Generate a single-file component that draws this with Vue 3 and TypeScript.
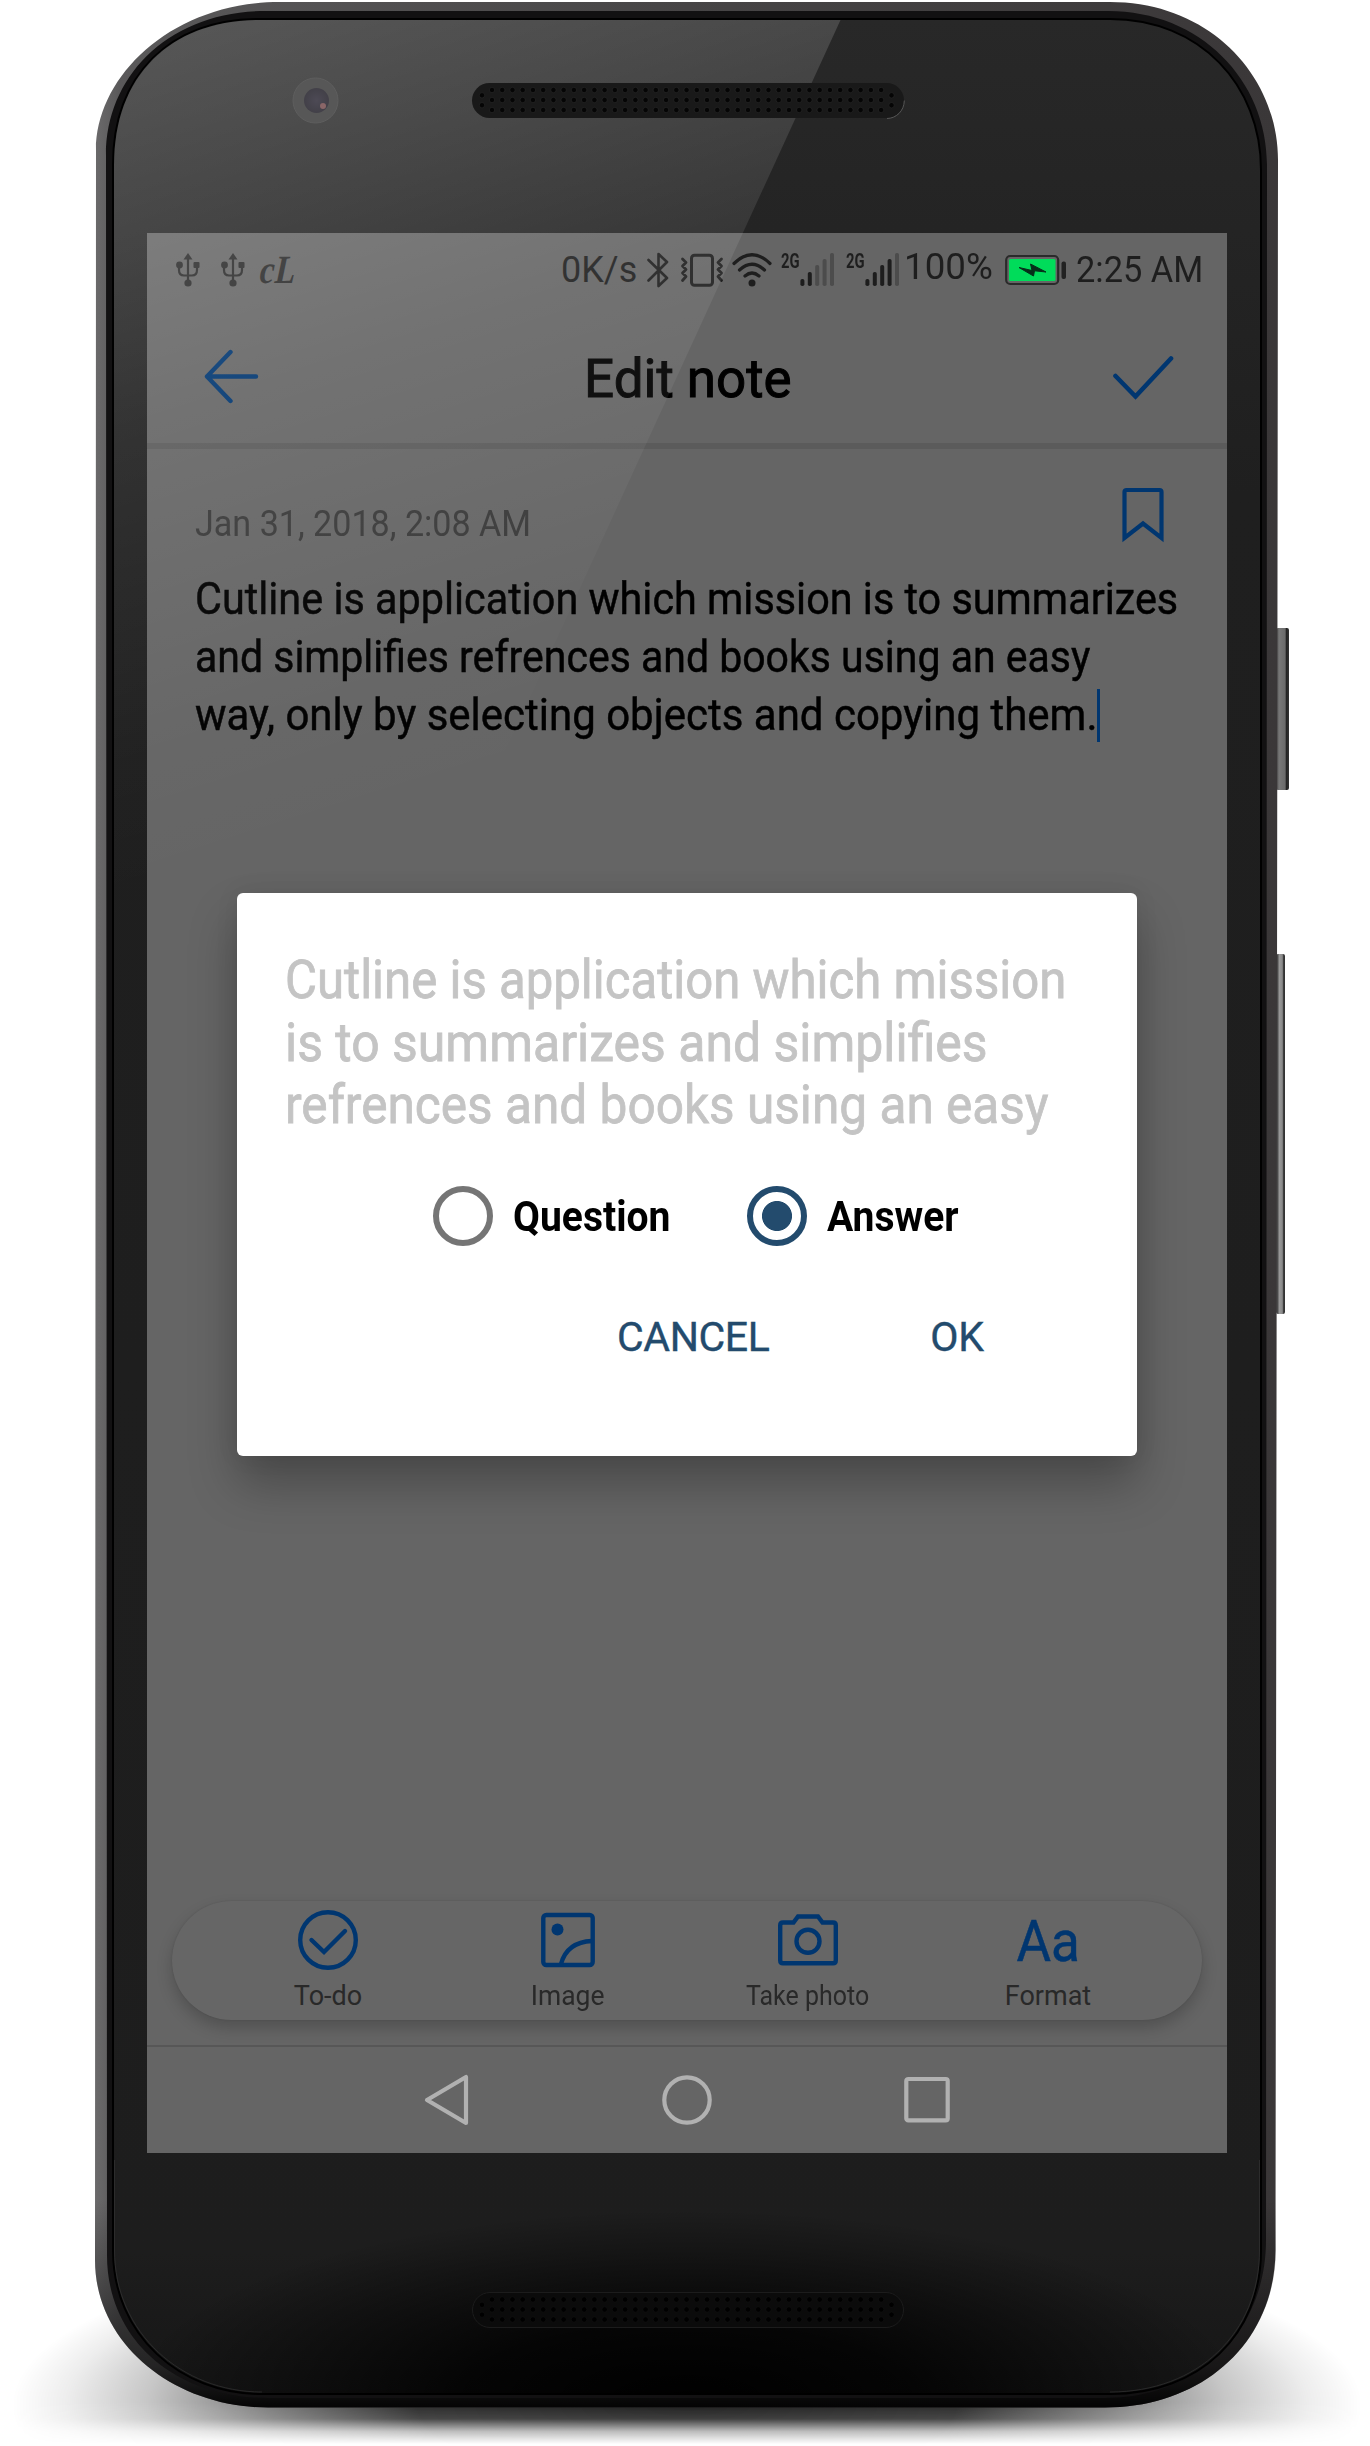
<script setup lang="ts">
interface Dot { x: number; y: number }
interface Bar { x: number; h: number; on: boolean }

// speaker perforation: three full rows plus two holes at each rounded end
const dots: Dot[] = []
for (let c = 0; c < 39; c++) {
  for (let r = 0; r < 3; r++) dots.push({ x: 492 + c * 10.24, y: 90 + r * 10 })
}
for (const x of [482, 891.5]) dots.push({ x, y: 95.3 }, { x, y: 105.2 })

const bars = (active: number): Bar[] =>
  [7, 14, 21, 27, 33].map((h, i) => ({ x: 0.4 + i * 7.4, h, on: i < active }))
const signals = [bars(2), bars(4)]

const noteLines = [
  'Cutline is application which mission is to summarizes',
  'and simplifies refrences and books using an easy',
  'way, only by selecting objects and copying them.',
]
const quoteLines = [
  'Cutline is application which mission',
  'is to summarizes and simplifies',
  'refrences and books using an easy',
]
</script>

<template>
  <main class="stage">
    <svg class="device" width="1370" height="2446" viewBox="0 0 1370 2446">
      <defs>
        <radialGradient id="floor" cx="0.5" cy="0.5" r="0.5">
          <stop offset="0" stop-color="#000" stop-opacity="0.9" />
          <stop offset="0.4" stop-color="#000" stop-opacity="0.85" />
          <stop offset="0.62" stop-color="#000" stop-opacity="0.52" />
          <stop offset="0.8" stop-color="#000" stop-opacity="0.22" />
          <stop offset="0.92" stop-color="#000" stop-opacity="0.07" />
          <stop offset="1" stop-color="#000" stop-opacity="0" />
        </radialGradient>
        <linearGradient id="floorFade" gradientUnits="userSpaceOnUse" x1="0" y1="2402" x2="0" y2="2444">
          <stop offset="0" stop-color="#fff" />
          <stop offset="0.4" stop-color="#fff" stop-opacity="0.85" />
          <stop offset="0.7" stop-color="#fff" stop-opacity="0.3" />
          <stop offset="1" stop-color="#fff" stop-opacity="0" />
        </linearGradient>
        <mask id="floorMask" maskUnits="userSpaceOnUse" x="0" y="2150" width="1370" height="296">
          <rect y="2150" width="1370" height="296" fill="url(#floorFade)" />
        </mask>
        <linearGradient id="rim" gradientUnits="userSpaceOnUse" x1="96" y1="0" x2="1278" y2="0">
          <stop offset="0" stop-color="#6a696a" />
          <stop offset="0.02" stop-color="#5a595a" />
          <stop offset="0.5" stop-color="#474546" />
          <stop offset="1" stop-color="#3a3738" />
        </linearGradient>
        <linearGradient id="rimDark" gradientUnits="userSpaceOnUse" x1="0" y1="2200" x2="0" y2="2408">
          <stop offset="0" stop-color="#000" stop-opacity="0" />
          <stop offset="0.8" stop-color="#000" stop-opacity="0.6" />
          <stop offset="1" stop-color="#000" stop-opacity="0.95" />
        </linearGradient>
        <linearGradient id="glass" gradientUnits="userSpaceOnUse" x1="0" y1="19" x2="0" y2="2395">
          <stop offset="0" stop-color="#282828" />
          <stop offset="0.2" stop-color="#1f1f1f" />
          <stop offset="0.94" stop-color="#1d1d1d" />
          <stop offset="1" stop-color="#161616" />
        </linearGradient>
        <radialGradient id="chin" gradientUnits="userSpaceOnUse" cx="0" cy="0" r="1" gradientTransform="translate(687 2400) scale(560 190)">
          <stop offset="0" stop-color="#000" />
          <stop offset="0.4" stop-color="#000" stop-opacity="0.8" />
          <stop offset="1" stop-color="#000" stop-opacity="0" />
        </radialGradient>
        <linearGradient id="key" x1="0" y1="0" x2="1" y2="0">
          <stop offset="0" stop-color="#4a4a4a" />
          <stop offset="0.25" stop-color="#777" />
          <stop offset="0.7" stop-color="#6a6a6a" />
          <stop offset="0.8" stop-color="#222" />
          <stop offset="1" stop-color="#333" />
        </linearGradient>
        <linearGradient id="rocker" x1="0" y1="0" x2="1" y2="0">
          <stop offset="0.2" stop-color="#4a4a4a" />
          <stop offset="0.35" stop-color="#999" />
          <stop offset="0.7" stop-color="#8a8a8a" />
          <stop offset="0.85" stop-color="#333" />
        </linearGradient>
      </defs>
      <ellipse cx="687" cy="2405" rx="675" ry="185" fill="url(#floor)" mask="url(#floorMask)" />
      <rect x="1276" y="628" width="13" height="162" rx="2" fill="url(#key)" />
      <rect x="1276" y="954" width="9" height="360" rx="2" fill="url(#rocker)" />
      <path fill="url(#rim)" d="M96 150C96 76 172 2 280 2H1110C1210 2 1278 76 1278 160L1275.500 2250C1275 2345 1200 2407.500 1105 2407.500H268C175 2407.500 95 2345 95 2260Z" />
      <path fill="url(#rimDark)" d="M95 2200H1276V2250C1275 2345 1200 2407.500 1105 2407.500H268C175 2407.500 95 2345 95 2260Z" />
      <path fill="#121112" d="M106 155C106 75 170 11 266 11H1108C1200 11 1267 80 1267 165L1266 2240C1266 2330 1200 2398 1105 2398H268C175 2398 107 2340 107 2255Z" />
      <path fill="url(#glass)" stroke="#000" stroke-width="2" d="M113 165C113 75 170 19 260 19H1110C1200 19 1261 85 1261 170V2250C1261 2335 1200 2394 1110 2394H262C180 2394 113 2335 113 2250Z" />
      <path fill="url(#chin)" d="M113 2165H1261V2250C1261 2335 1200 2394 1110 2394H262C180 2394 113 2335 113 2250Z" />
      <path fill="none" stroke="#333" stroke-width="1" d="M114.500 2160V2250C114.500 2333 182 2392 262 2392M1110 2392C1198 2392 1259.500 2333 1259.500 2250V2160" opacity=".7" />
    </svg>

    <section class="screen">
      <header class="status">
        <svg v-for="n in 2" :key="n" class="usb" width="24" height="36" viewBox="0 0 24 36">
          <path d="M12 5V30M3 13V18Q3 23.500 8 23.500H16Q21 23.500 21 18V13" fill="none" stroke="currentColor" stroke-width="2.200" />
          <path d="M12 1L16.500 7.500H7.500Z" fill="currentColor" />
          <circle cx="3.500" cy="13" r="3.400" fill="currentColor" />
          <rect x="17.500" y="10" width="6" height="6" rx="1" fill="currentColor" />
          <circle cx="12" cy="31" r="3.600" fill="currentColor" />
        </svg>
        <span class="logo">cL</span>
        <span class="t speed">0K/s</span>
        <svg class="bt" width="22" height="36" viewBox="0 0 22 36">
          <path d="M1.500 8L20 26L11.500 34V2L20 10L1.500 28.500" fill="none" stroke="currentColor" stroke-width="2.600" stroke-linejoin="round" stroke-linecap="round" />
        </svg>
        <svg class="vib" width="44" height="36" viewBox="0 0 44 36">
          <rect x="11.500" y="3.200" width="21" height="30" rx="3" fill="none" stroke="currentColor" stroke-width="3" />
          <path d="M2.500 7L6 10.500L2.500 14L6 17.500L2.500 21L6 24.500L2.500 28.500M41.500 7L38 10.500L41.500 14L38 17.500L41.500 21L38 24.500L41.500 28.500" fill="none" stroke="currentColor" stroke-width="2.800" stroke-linejoin="round" stroke-linecap="round" />
        </svg>
        <svg class="wifi" width="40" height="36" viewBox="0 0 40 36">
          <path d="M2 11.500Q20 -6 38 11.500M7.500 18Q20 6.500 32.500 18M13 24Q20 18 27 24" fill="none" stroke="currentColor" stroke-width="3.200" stroke-linecap="round" />
          <circle cx="20" cy="31" r="3.500" fill="currentColor" />
        </svg>
        <span v-for="(s, i) in signals" :key="i" class="signal">
          <b class="gen">2G</b>
          <svg width="34" height="36" viewBox="0 0 34 36">
            <rect v-for="b in s" :key="b.x" :x="b.x" :y="34 - b.h" width="4" :height="b.h" rx="1.800" :fill="b.on ? '#1d1d1d' : '#4c4c4c'" />
          </svg>
        </span>
        <span class="t percent">100%</span>
        <svg class="battery" width="62" height="32" viewBox="0 0 62 32">
          <rect x="1.200" y="2" width="52" height="28" rx="4" fill="none" stroke="#2a2a2a" stroke-width="2.200" />
          <rect x="4" y="5" width="46.500" height="22" rx="1.500" fill="#00dc5a" />
          <path d="M14 13.500L27 16.500L25.500 10L41 18L29.500 16.800L28.500 22Z" fill="#062f1a" stroke="#062f1a" />
          <rect x="56.500" y="7.500" width="4.500" height="17.500" rx="2" fill="#222" />
        </svg>
        <span class="t clock">2:25 AM</span>
      </header>

      <nav class="appbar">
        <svg width="56" height="58" viewBox="0 0 56 58">
          <path d="M52 28.500H3M26.500 4L3 28.500L26.500 53" fill="none" stroke="currentColor" stroke-width="4.400" stroke-linecap="round" stroke-linejoin="round" />
        </svg>
        <h1 class="t">Edit note</h1>
        <svg width="62" height="46" viewBox="0 0 62 46">
          <path d="M3.500 22L23.500 42.500L59 4.500" fill="none" stroke="currentColor" stroke-width="4.600" stroke-linecap="round" />
        </svg>
      </nav>

      <article class="note">
        <div class="meta">
          <time class="t">Jan 31, 2018, 2:08 AM</time>
          <svg width="44" height="58" viewBox="0 0 44 58">
            <path d="M3.500 52V6Q3.500 4 5.500 4H38.500Q40.500 4 40.500 6V52L22 37.500Z" fill="none" stroke="currentColor" stroke-width="4.200" />
          </svg>
        </div>
        <p class="body">
          <span v-for="(l, i) in noteLines" :key="l" class="row"><span class="t" :class="'n' + i">{{ l }}</span><i v-if="i === 2" class="caret"></i></span>
        </p>
      </article>

      <footer class="tools">
        <div class="tool">
          <svg width="60" height="60" viewBox="0 0 60 60">
            <circle cx="30" cy="30" r="27.800" /><path d="M13.500 30L26 42L47 21" stroke-linecap="round" />
          </svg>
          <span class="t">To-do</span>
        </div>
        <div class="tool">
          <svg width="60" height="60" viewBox="0 0 60 60">
            <rect x="5.300" y="5" width="49.400" height="50" rx="3" />
            <circle cx="19.500" cy="19.500" r="6" fill="currentColor" stroke="none" />
            <path d="M23 54Q29 32 54 31" />
          </svg>
          <span class="t image">Image</span>
        </div>
        <div class="tool">
          <svg width="60" height="60" viewBox="0 0 60 60">
            <path d="M5 12.500H15.500L20 6.500H40L44.500 12.500H55Q57.800 12.500 57.800 15.300V50.300Q57.800 53.300 55 53.300H5Q2.200 53.300 2.200 50.300V15.300Q2.200 12.500 5 12.500Z" />
            <circle cx="30" cy="31.300" r="11.500" />
          </svg>
          <span class="t photo">Take photo</span>
        </div>
        <div class="tool">
          <span class="t aa">Aa</span>
          <span class="t">Format</span>
        </div>
      </footer>

      <nav class="keys">
        <svg width="50" height="56" viewBox="0 0 50 56"><path d="M44 5V51L5 28Z" /></svg>
        <svg width="50" height="56" viewBox="0 0 50 56"><circle cx="25" cy="28" r="22.700" /></svg>
        <svg width="50" height="56" viewBox="0 0 50 56"><rect x="4.300" y="7" width="41.400" height="41.400" rx="2" /></svg>
      </nav>
    </section>

    <section class="dialog">
      <p class="quote">
        <span v-for="(l, i) in quoteLines" :key="l" class="row"><span class="t" :class="'q' + i">{{ l }}</span></span>
      </p>
      <div class="radios">
        <label class="radio"><i class="ring"></i><span class="t choice">Question</span></label>
        <label class="radio on"><i class="ring"></i><span class="t choice">Answer</span></label>
      </div>
      <div class="actions">
        <button type="button">CANCEL</button>
        <button type="button">OK</button>
      </div>
    </section>

    <svg class="gloss" width="1370" height="2446" viewBox="0 0 1370 2446">
      <defs>
        <linearGradient id="sheen" gradientUnits="userSpaceOnUse" x1="0" y1="0" x2="270" y2="855">
          <stop offset="0" stop-color="#fff" stop-opacity="0.240" />
          <stop offset="0.113" stop-color="#fff" stop-opacity="0.210" />
          <stop offset="0.3" stop-color="#fff" stop-opacity="0.152" />
          <stop offset="0.5" stop-color="#fff" stop-opacity="0.085" />
          <stop offset="0.85" stop-color="#fff" stop-opacity="0.015" />
          <stop offset="1" stop-color="#fff" stop-opacity="0" />
        </linearGradient>
        <radialGradient id="lens"><stop offset="0" stop-color="#4d4a55" /><stop offset="1" stop-color="#424048" /></radialGradient>
      </defs>
      <path fill="url(#sheen)" d="M114 165C114 75 170 20 260 20H840.500L437 900H114Z" />
      <circle cx="315.500" cy="100.500" r="22.500" fill="#575757" stroke="#5e5e5e" stroke-width="1" />
      <circle cx="316.500" cy="100.500" r="12.500" fill="url(#lens)" />
      <circle cx="323" cy="106" r="3" fill="#8a6668" />
      <rect x="472" y="83" width="432" height="35" rx="17.500" fill="#191919" />
      <path d="M887 118.500C896 118.500 904.300 111 904.300 100.500" fill="none" stroke="#555" />
      <circle v-for="(d, i) in dots" :key="'a' + i" :cx="d.x" :cy="d.y" r="2.700" fill="#050505" stroke="#303030" stroke-width=".5" />
      <g transform="translate(0 2209.500)">
        <rect x="472.500" y="83" width="431" height="35" rx="17.500" fill="#0b0b0b" stroke="#1c1c1c" />
        <circle v-for="(d, i) in dots" :key="'b' + i" :cx="d.x" :cy="d.y" r="2.700" fill="#000" stroke="#171717" stroke-width=".5" />
      </g>
    </svg>
  </main>
</template>

<style>
body { margin: 0; background: #fff; }
</style>

<style scoped>
.stage { position: relative; width: 1370px; height: 2446px; overflow: hidden; background: #fff; box-sizing: border-box; padding: 233px 0 0 147px; font-family: Roboto, "Liberation Sans", sans-serif; }
.device, .gloss { position: absolute; left: 0; top: 0; pointer-events: none; }
.t { white-space: nowrap; transform-origin: left center; }
.screen { position: relative; width: 1080px; height: 1920px; background: #656565; display: flex; flex-direction: column; }
.status { height: 74px; display: flex; align-items: center; padding-left: 29px; box-sizing: border-box; color: #1e1e1e; font-size: 36px; line-height: 74px; }
.status > * { flex: none; }
.usb { margin-right: 21px; color: #292929; }
.logo { width: 36px; margin-left: -6px; font: italic bold 40px/74px "Liberation Serif", serif; color: #292929; transform: scaleX(.84) skewX(-4deg); transform-origin: left center; }
.speed { width: 74px; margin-left: 265px; }
.bt { margin-left: 12px; }
.vib { margin-left: 11px; }
.wifi { margin-left: 8px; }
.signal { display: flex; width: 53px; margin-left: 9px; align-items: center; }
.signal + .signal { margin-left: 12px; }
.gen { width: 19px; font-size: 20px; line-height: 20px; margin-top: -18px; transform: scaleX(.74); transform-origin: left center; }
.percent { width: 88px; margin-left: 5px; position: relative; top: -3px; transform: scaleX(1.02); }
.battery { margin-left: 13px; }
.clock { margin-left: 9px; transform: scaleX(.955); }
.appbar { height: 142px; box-sizing: border-box; padding: 4px 53px 0 57px; border-bottom: 6px solid #5b5b5b; display: flex; align-items: center; justify-content: space-between; color: #003670; }
.appbar h1 { margin: 3px 0 0 3px; font-size: 54px; font-weight: 400; color: #000; -webkit-text-stroke: 1px #000; transform: scaleX(.98); transform-origin: center; }
.note { flex: 1; padding: 37px 62px 0 48px; color: #000; }
.meta { display: flex; justify-content: space-between; height: 84px; }
.meta time { font-size: 36px; line-height: 76px; color: #393939; transform: scaleX(.947); }
.meta svg { color: #003670; }
.body { margin: 0; font-size: 45px; line-height: 58px; -webkit-text-stroke: .5px #000; }
.row { display: flex; align-items: center; white-space: nowrap; }
.n0 { transform: scaleX(.919); }
.n1 { transform: scaleX(.911); }
.n2 { transform: scaleX(.933); }
.caret { width: 3px; height: 53px; background: #003670; margin-left: -65px; }
.tools { width: 1030px; height: 119px; margin: 0 0 25px 25px; padding: 9px 34px 0 36px; box-sizing: border-box; border-radius: 60px; background: #666; box-shadow: 0 8px 16px rgba(0,0,0,.2), 0 0 2px rgba(0,0,0,.12); display: flex; }
.tool { flex: none; width: 240px; display: flex; flex-direction: column; align-items: center; gap: 9px; font-size: 27px; line-height: 34px; color: #292929; }
.tool .t { transform-origin: center; }
.tool svg { fill: none; stroke: #003670; stroke-width: 4.400; color: #003670; }
.tool .aa { height: 60px; font-size: 57px; line-height: 63px; color: #003670; transform: scaleX(.93); -webkit-text-stroke: .5px #003670; }
.image { transform: scaleX(.98); }
.photo { transform: scaleX(.925); }
.keys { height: 108px; box-sizing: border-box; border-top: 2px solid #575757; display: flex; align-items: center; justify-content: center; gap: 190px; }
.keys svg { fill: none; stroke: #b1b1b1; stroke-width: 4.200; stroke-linejoin: round; }
.dialog { position: absolute; left: 237px; top: 893px; width: 900px; height: 563px; box-sizing: border-box; padding: 56px 50px 0 48px; border-radius: 6px; background: #fff; box-shadow: 0 28px 48px rgba(0,0,0,.28), 0 0 24px rgba(0,0,0,.07); }
.quote { margin: 0; font-size: 54px; line-height: 62.700px; color: #c4c4c4; -webkit-text-stroke: .8px #c4c4c4; }
.q0 { transform: scaleX(.91); }
.q1 { transform: scaleX(.925); }
.q2 { transform: scaleX(.918); }
.radios { display: flex; margin: 49px 0 0 148px; height: 60px; }
.radio { display: flex; align-items: center; width: 314px; font-size: 42px; font-weight: 700; gap: 20px; }
.choice { transform: scaleX(.93); }
.ring { width: 60px; height: 60px; box-sizing: border-box; border: 6px solid #757575; border-radius: 50%; flex: none; }
.on .ring { border-color: #234b6d; background: radial-gradient(circle, #234b6d 14.600px, transparent 15.400px); }
.actions { display: flex; margin: 61px 0 0 332px; height: 60px; gap: 161px; }
.actions button { border: 0; padding: 0; background: none; font: 41px/60px Roboto, sans-serif; letter-spacing: -.4px; color: #234b6d; -webkit-text-stroke: .4px #234b6d; }
</style>
